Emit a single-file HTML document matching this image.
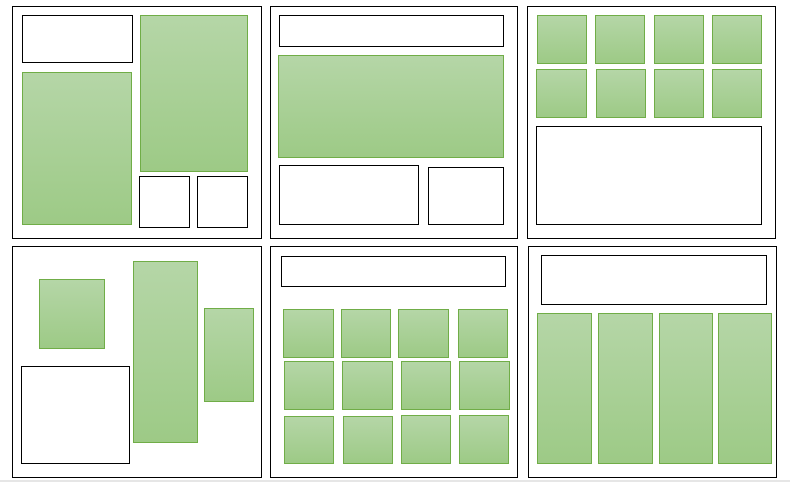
<!DOCTYPE html>
<html><head><style>
body{margin:0;width:790px;height:482px;background:#fff;position:relative;overflow:hidden}
div{position:absolute;box-sizing:border-box}
.o{border:1px solid #000;background:#fff}
.w{border:1px solid #000;background:#fff}
.g{border:1px solid #70ad47;background:linear-gradient(#b5d6a7,#9dca86)}
</style></head><body>
<div style="left:0;top:480px;width:790px;height:2px;background:#e6e6e6"></div>
<!-- panel 1 -->
<div class="o" style="left:12px;top:6px;width:250px;height:233px"></div>
<div class="w" style="left:22px;top:15px;width:111px;height:48px"></div>
<div class="g" style="left:22px;top:72px;width:110px;height:153px"></div>
<div class="g" style="left:140px;top:15px;width:108px;height:157px"></div>
<div class="w" style="left:139px;top:176px;width:51px;height:52px"></div>
<div class="w" style="left:197px;top:176px;width:51px;height:52px"></div>
<!-- panel 2 -->
<div class="o" style="left:270px;top:6px;width:248px;height:233px"></div>
<div class="w" style="left:279px;top:15px;width:225px;height:32px"></div>
<div class="g" style="left:278px;top:55px;width:226px;height:103px"></div>
<div class="w" style="left:279px;top:165px;width:140px;height:60px"></div>
<div class="w" style="left:428px;top:167px;width:76px;height:58px"></div>
<!-- panel 3 -->
<div class="o" style="left:527px;top:6px;width:249px;height:233px"></div>
<div class="g" style="left:537px;top:15px;width:50px;height:49px"></div>
<div class="g" style="left:595px;top:15px;width:50px;height:49px"></div>
<div class="g" style="left:654px;top:15px;width:50px;height:49px"></div>
<div class="g" style="left:712px;top:15px;width:50px;height:49px"></div>
<div class="g" style="left:536px;top:69px;width:51px;height:49px"></div>
<div class="g" style="left:596px;top:69px;width:50px;height:49px"></div>
<div class="g" style="left:654px;top:69px;width:50px;height:49px"></div>
<div class="g" style="left:712px;top:69px;width:50px;height:49px"></div>
<div class="w" style="left:536px;top:126px;width:226px;height:99px"></div>
<!-- panel 4 -->
<div class="o" style="left:12px;top:246px;width:250px;height:232px"></div>
<div class="g" style="left:39px;top:279px;width:66px;height:70px"></div>
<div class="g" style="left:133px;top:261px;width:65px;height:182px"></div>
<div class="g" style="left:204px;top:308px;width:50px;height:94px"></div>
<div class="w" style="left:21px;top:366px;width:109px;height:98px"></div>
<!-- panel 5 -->
<div class="o" style="left:270px;top:246px;width:248px;height:232px"></div>
<div class="w" style="left:281px;top:256px;width:225px;height:31px"></div>
<div class="g" style="left:283px;top:309px;width:51px;height:49px"></div>
<div class="g" style="left:341px;top:309px;width:50px;height:49px"></div>
<div class="g" style="left:398px;top:309px;width:51px;height:49px"></div>
<div class="g" style="left:458px;top:309px;width:50px;height:49px"></div>
<div class="g" style="left:284px;top:361px;width:50px;height:49px"></div>
<div class="g" style="left:342px;top:361px;width:51px;height:49px"></div>
<div class="g" style="left:401px;top:361px;width:50px;height:49px"></div>
<div class="g" style="left:459px;top:361px;width:51px;height:49px"></div>
<div class="g" style="left:284px;top:416px;width:50px;height:48px"></div>
<div class="g" style="left:343px;top:416px;width:50px;height:48px"></div>
<div class="g" style="left:401px;top:415px;width:50px;height:49px"></div>
<div class="g" style="left:459px;top:415px;width:50px;height:49px"></div>
<!-- panel 6 -->
<div class="o" style="left:528px;top:246px;width:249px;height:232px"></div>
<div class="w" style="left:541px;top:255px;width:226px;height:50px"></div>
<div class="g" style="left:537px;top:313px;width:55px;height:151px"></div>
<div class="g" style="left:598px;top:313px;width:55px;height:151px"></div>
<div class="g" style="left:659px;top:313px;width:54px;height:151px"></div>
<div class="g" style="left:718px;top:313px;width:54px;height:151px"></div>
</body></html>
